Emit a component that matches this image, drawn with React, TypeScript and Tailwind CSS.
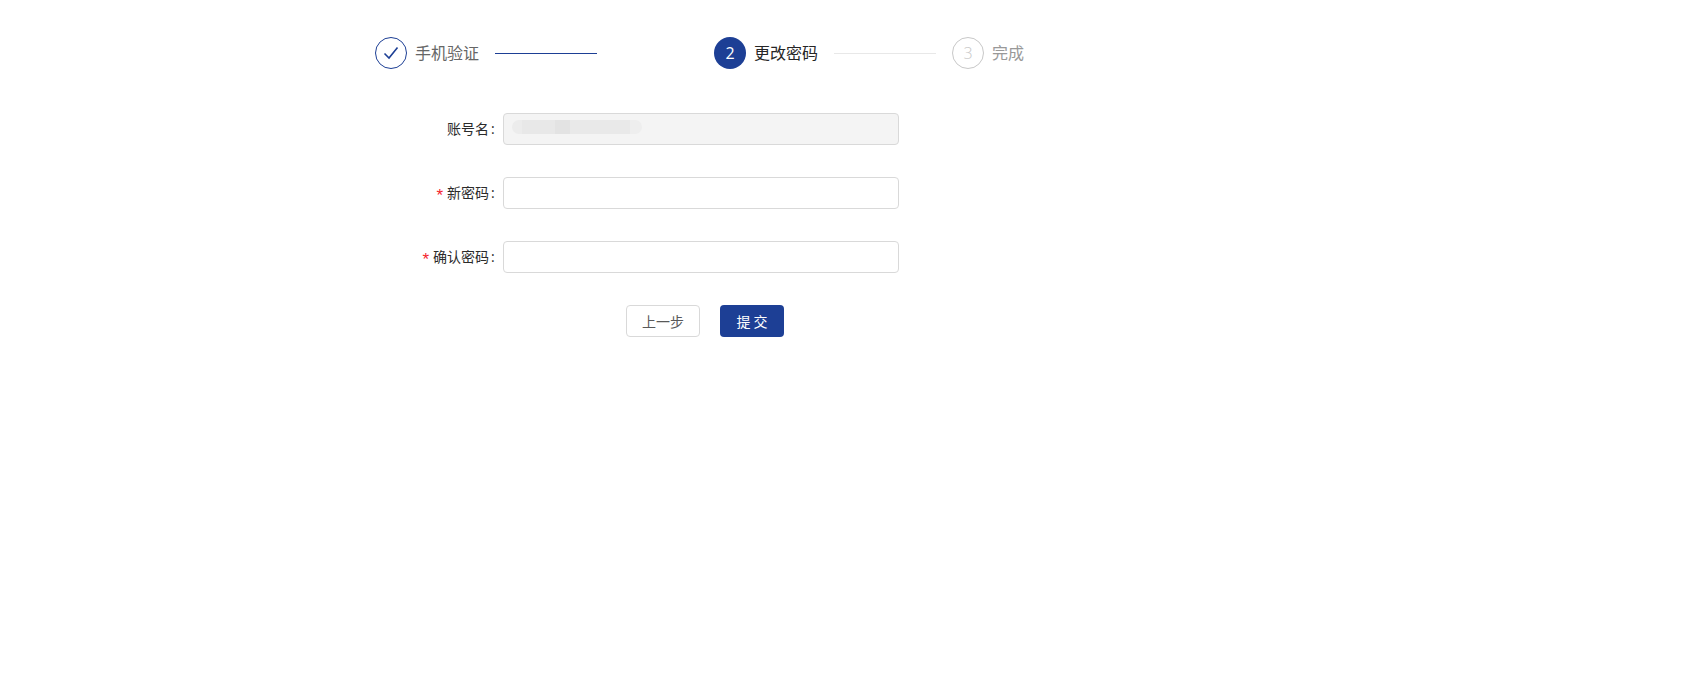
import React from "react";

const font = { fontFamily: '"Open Sans", "Noto Sans CJK SC", sans-serif' };

function Row({ label, required, disabled }: { label: string; required?: boolean; disabled?: boolean }) {
  return (
    <div className="flex h-8 items-center">
      <label className="flex w-[128px] shrink-0 items-center justify-end pr-[8px] pb-[2px] text-[14px] text-[#2b2b2b]">
        {required && (
          <span
            className="mr-1 translate-y-[3px] text-[17px] leading-none text-[#f5222d]"
            style={{ fontFamily: '"Liberation Sans", sans-serif' }}
          >
            *
          </span>
        )}
        <span>{label}</span>
        <span className="ml-[2px] w-[4px]">:</span>
      </label>
      <div
        className={`relative h-8 w-[396px] overflow-hidden rounded-[4px] border border-[#d9d9d9] ${disabled ? "bg-[#f4f4f4]" : "bg-white"}`}
      >
        {disabled && (
          <div className="mt-[6px] ml-[8px] flex h-[14px] items-stretch blur-[0.6px]">
            <div className="w-[10px] rounded-l-full bg-[#ececec]" />
            <div className="w-[33px] bg-[#e8e8e8]" />
            <div className="w-[15px] bg-[#e3e3e3]" />
            <div className="w-[60px] bg-[#e9e9e9]" />
            <div className="w-[12px] rounded-r-full bg-[#eeeeee]" />
          </div>
        )}
      </div>
    </div>
  );
}

export default function App() {
  return (
    <div className="min-h-[678px] bg-white pt-[37px] pl-[375px]" style={font}>
      <div className="flex h-8 items-center text-[16px]">
        <div className="flex w-[339px] items-center">
          <div className="flex h-8 w-8 items-center justify-center rounded-full border border-[#1d3f95]">
            <svg width="16" height="14" viewBox="0 0 16 14" fill="none" stroke="#1d3f95" strokeWidth="1.6">
              <path d="M1.5 7.5 L6 12 L14.5 1.5" />
            </svg>
          </div>
          <span className="ml-2 text-[#666666]">手机验证</span>
          <div className="ml-4 h-px w-[102px] bg-[#1d3f95]" />
        </div>
        <div className="flex w-[238px] items-center">
          <div className="flex h-8 w-8 items-center justify-center rounded-full bg-[#1d3f95] text-white">2</div>
          <span className="ml-2 text-[#262626]">更改密码</span>
          <div className="ml-4 h-px w-[102px] bg-[#e8e8e8]" />
        </div>
        <div className="flex items-center">
          <div className="flex h-8 w-8 items-center justify-center rounded-full border border-[#c8c8c8] font-light text-[#c8c8c8]">3</div>
          <span className="ml-2 text-[#999999]">完成</span>
        </div>
      </div>

      <div className="mt-[44px] flex flex-col gap-8">
        <Row label="账号名" disabled />
        <Row label="新密码" required />
        <Row label="确认密码" required />
      </div>

      <div className="mt-8 ml-[251px] flex items-center text-[14px]">
        <button className="h-8 w-[74px] rounded-[4px] border border-[#d9d9d9] bg-white text-[#595959]">上一步</button>
        <button className="ml-5 h-8 w-16 rounded-[4px] bg-[#1d3f95] pl-[3px] tracking-[3px] text-white">提交</button>
      </div>
    </div>
  );
}
